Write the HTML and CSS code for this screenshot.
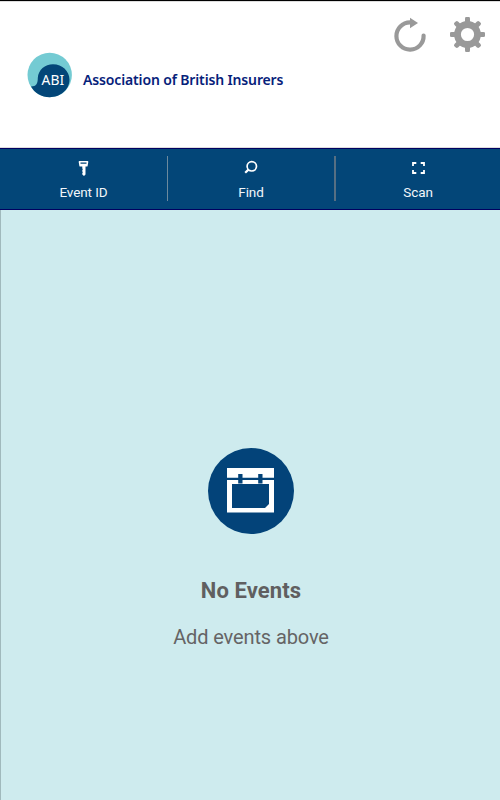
FILE: index.html
```html
<!DOCTYPE html>
<html lang="en">
<head>
<meta charset="utf-8">
<title>Association of British Insurers</title>
<link rel="stylesheet" href="styles.css">
</head>
<body>
<div class="app">
  <header class="header">
    <div class="brand">
      <svg class="logo" viewBox="0 0 46 46">
        <circle cx="22.7" cy="23" r="22.2" fill="#74cbd3"/>
        <path d="M4 34.500C9.5 34.5 10.8 31 10.8 26C11.2 18 18 12.3 26 12.3C35.5 12.3 42.5 19.5 42.5 27.500C42.5 38 33 45.2 22.7 45.2C14.5 45.2 7.500 41 4 34.500Z" fill="#034678"/>
        <text class="logo-text" x="14.600" y="33" textLength="22.500" lengthAdjust="spacingAndGlyphs">ABI</text>
      </svg>
      <span class="brand-name">Association of British Insurers</span>
    </div>
    <div class="actions">
      <svg class="refresh" viewBox="0 0 36 36">
        <path d="M31.600 19.500A13.600 13.600 0 1 1 18 6.400" fill="none" stroke="#999" stroke-width="4.200" stroke-linecap="round"/>
        <path d="M18 1.800L26 7L18 12.200Z" fill="#999"/>
      </svg>
      <svg class="gear" viewBox="-18.500 -18.500 36 36">
        <g fill="none" stroke="#999">
          <circle r="10" stroke-width="6.800"/>
          <path d="M0 -11V-16M0 11V16M-11 0H-16M11 0H16M-8 -8L-11.500 -11.500M8 -8L11.500 -11.500M-8 8L-11.500 11.500M8 8L11.500 11.500" stroke-width="5"/>
          <path d="M-1.200 -16.200H1.200M-1.200 16.200H1.200M-16.200 -1.200V1.200M16.200 -1.200V1.200M-12.200 -10.800L-10.800 -12.200M12.200 -10.800L10.800 -12.200M-12.200 10.800L-10.800 12.200M12.200 10.800L10.800 12.200" stroke-width="2.600" stroke-linecap="round"/>
        </g>
      </svg>
    </div>
  </header>
  <nav class="tabs">
    <a class="tab">
      <svg class="icon" viewBox="0.500 0 16 18"><path fill="#fff" fill-rule="evenodd" d="M4 2H12Q13 2 12.800 3L12.100 7Q12 7.500 11.400 7.500H10V15.500L8.500 17L6.800 15.500V14L7.400 13.200L6.800 12.400V11L7.400 10.200L6.800 9.400V7.500H4.600Q4 7.500 3.900 7L3.200 3Q3 2 4 2ZM5 3.500V4.800H11V3.500Z"/></svg>
      <span>Event ID</span>
    </a>
    <a class="tab">
      <svg class="icon" viewBox="0.500 0 16 18"><circle cx="9.300" cy="7.300" r="4.700" fill="none" stroke="#fff" stroke-width="1.700"/><path d="M6 10.600L2.700 13.800" stroke="#fff" stroke-width="2.200"/></svg>
      <span>Find</span>
    </a>
    <a class="tab">
      <svg class="icon" viewBox="0 0 16 18"><path d="M3 7V4H6.300M10.700 4H14V7M14 11V14H10.700M6.300 14H3V11" fill="none" stroke="#fff" stroke-width="1.800"/></svg>
      <span>Scan</span>
    </a>
  </nav>
  <main class="empty">
    <svg class="calendar" viewBox="0 0 88 88">
      <circle cx="44" cy="44" r="43" fill="#034379"/>
      <path d="M20 21H67V65.500H20Z" fill="#fff"/>
      <path d="M20 30.800H67V33H20ZM31.200 27H35.500V36.500H31.200ZM51.200 27H55.500V36.500H51.200ZM25 37H62V57L58 61H25Z" fill="#034379"/>
    </svg>
    <h1 class="title">No Events</h1>
    <p class="hint">Add events above</p>
  </main>
</div>
</body>
</html>
```
FILE: styles.css
```css
* { box-sizing: border-box; }
body { margin: 0; font-family: Roboto, sans-serif; }
.app { width: 500px; height: 800px; display: flex; flex-direction: column; border-top: 1px solid #000; }
.header { height: 147px; background: #fff; border-top: 1px solid #ddd; border-bottom: 1px solid #ddd; display: flex; justify-content: space-between; padding: 14px 14px 0 27px; }
.brand { display: flex; padding-top: 36px; }
.logo { width: 46px; height: 46px; }
.logo-text { font: 14.5px "Noto Sans", sans-serif; fill: #fff; }
.brand-name { margin: 18px 0 0 10px; font: 600 14px/20px "Noto Sans", sans-serif; letter-spacing: -0.14px; color: #06217a; white-space: nowrap; }
.actions { display: flex; gap: 21px; padding-right: 1px; }
.refresh { width: 36px; height: 36px; }
.gear { width: 36px; height: 36px; overflow: visible; }
.tabs { height: 62px; background: #034678; border-top: 1px solid #000060; border-bottom: 1px solid #000060; display: grid; grid-template-columns: 168px 168px 164px; padding: 7px 0 8px; }
.tab { display: flex; flex-direction: column; align-items: center; padding-top: 3px; color: #f2f6fa; font-size: 13.5px; line-height: 16px; letter-spacing: -0.1px; border-right: 1px solid #6c8a9e; }
.tab:nth-child(2) { border-right: 2px solid #566f83; }
.tab:last-child { border-right: 0; }
.icon { width: 16px; height: 18px; margin-bottom: 7px; }
.empty { flex: 1; background: #ceebee; border-left: 1px solid #a0b9bc; display: flex; flex-direction: column; align-items: center; padding-top: 237px; color: #605f60; }
.calendar { width: 88px; height: 88px; }
.title { margin: 42px 0 0 1px; font-size: 22px; line-height: 28px; font-weight: 700; letter-spacing: 0.1px; }
.hint { margin: 19px 0 0 1px; font-size: 20px; line-height: 26px; font-weight: 400; letter-spacing: -0.12px; color: #656465; }
```
